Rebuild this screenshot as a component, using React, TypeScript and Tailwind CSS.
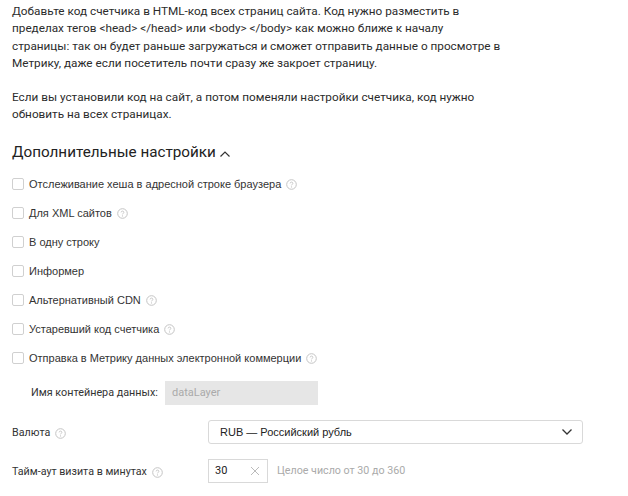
import React from "react";

const Help = () => (
  <svg width="11" height="11" viewBox="0 0 11 11" className="ml-[5px] shrink-0" fill="none">
    <circle cx="5.5" cy="5.5" r="4.8" stroke="#c4c4c4" strokeWidth="1" />
    <path d="M4.1 4.4c0-.8.6-1.3 1.4-1.3s1.4.5 1.4 1.2c0 1-1.4 1.1-1.4 2.1" stroke="#c4c4c4" strokeWidth="0.9" />
    <circle cx="5.5" cy="7.9" r="0.6" fill="#c4c4c4" />
  </svg>
);

const Check = ({ label, help = false }: { label: string; help?: boolean }) => (
  <div className="flex items-center h-[29px]">
    <span className="w-[12px] h-[12px] rounded-[2px] border border-[#d0d0d0] bg-white shrink-0" />
    <span className="ml-[5px] text-[#333] font-['Liberation_Sans',sans-serif] text-[11px]">{label}</span>
    {help && <Help />}
  </div>
);

export default function App() {
  return (
    <div className="w-[628px] h-[496px] overflow-hidden bg-white pl-[12px] pt-[3px] text-[10.7px] text-[#333] font-['Roboto','Liberation_Sans',sans-serif]">
      <div className="text-[11.75px] leading-[17.3px] w-[500px] text-[#2b2b2b]">
        <p>
          Добавьте код счетчика в HTML-код всех страниц сайта. Код нужно разместить в<br />
          пределах тегов &lt;head&gt; &lt;/head&gt; или &lt;body&gt; &lt;/body&gt; как можно ближе к началу<br />
          страницы: так он будет раньше загружаться и сможет отправить данные о просмотре в<br />
          Метрику, даже если посетитель почти сразу же закроет страницу.
        </p>
        <p className="mt-[17px]">
          Если вы установили код на сайт, а потом поменяли настройки счетчика, код нужно<br />
          обновить на всех страницах.
        </p>
      </div>
      <div className="flex items-center mt-[18px] h-[22px] text-[15.25px] text-[#222]">
        Дополнительные настройки
        <svg width="12" height="8" viewBox="0 0 12 8" className="ml-[3px] mt-[2px]" fill="none">
          <path d="M1.5 6.5 6 2l4.5 4.5" stroke="#333" strokeWidth="1.2" />
        </svg>
      </div>
      <div className="mt-[6px] flex flex-col">
        <Check label="Отслеживание хеша в адресной строке браузера" help />
        <Check label="Для XML сайтов" help />
        <Check label="В одну строку" />
        <Check label="Информер" />
        <Check label="Альтернативный CDN" help />
        <Check label="Устаревший код счетчика" help />
        <Check label="Отправка в Метрику данных электронной коммерции" help />
      </div>
      <div className="flex items-center mt-[8px] h-[24px]">
        <span className="ml-[19px] w-[134px] whitespace-nowrap text-[10.8px] text-[#333]">Имя контейнера данных:</span>
        <div className="w-[153px] h-[24px] bg-[#e6e6e6] text-[#aaa] text-[11px] flex items-center pl-[7px]">dataLayer</div>
      </div>
      <div className="flex items-center mt-[15px] h-[24px]">
        <div className="w-[196px] flex items-center mt-[3px]">
          Валюта
          <Help />
        </div>
        <div className="w-[375px] h-[24px] border border-[#d9d9d9] rounded-[3px] flex items-center justify-between pl-[11px] pr-[9px]">
          <span className="text-[#222] text-[11px] font-['Liberation_Sans',sans-serif]">RUB — Российский рубль</span>
          <svg width="12" height="8" viewBox="0 0 12 8" fill="none">
            <path d="M1.5 1.5 6 6l4.5-4.5" stroke="#333" strokeWidth="1.3" />
          </svg>
        </div>
      </div>
      <div className="flex items-center mt-[15px] h-[24px]">
        <div className="w-[196px] flex items-center whitespace-nowrap mt-[3px]">
          Тайм-аут визита в минутах
          <Help />
        </div>
        <div className="w-[60px] h-[24px] border border-[#d9d9d9] flex items-center justify-between pl-[6px] pr-[7px]">
          <span className="text-[#222] text-[11px]">30</span>
          <svg width="10" height="10" viewBox="0 0 10 10" fill="none">
            <path d="M1 1l8 8M9 1 1 9" stroke="#bbb" strokeWidth="1" />
          </svg>
        </div>
        <span className="ml-[9px] text-[#aaa]">Целое число от 30 до 360</span>
      </div>
    </div>
  );
}
